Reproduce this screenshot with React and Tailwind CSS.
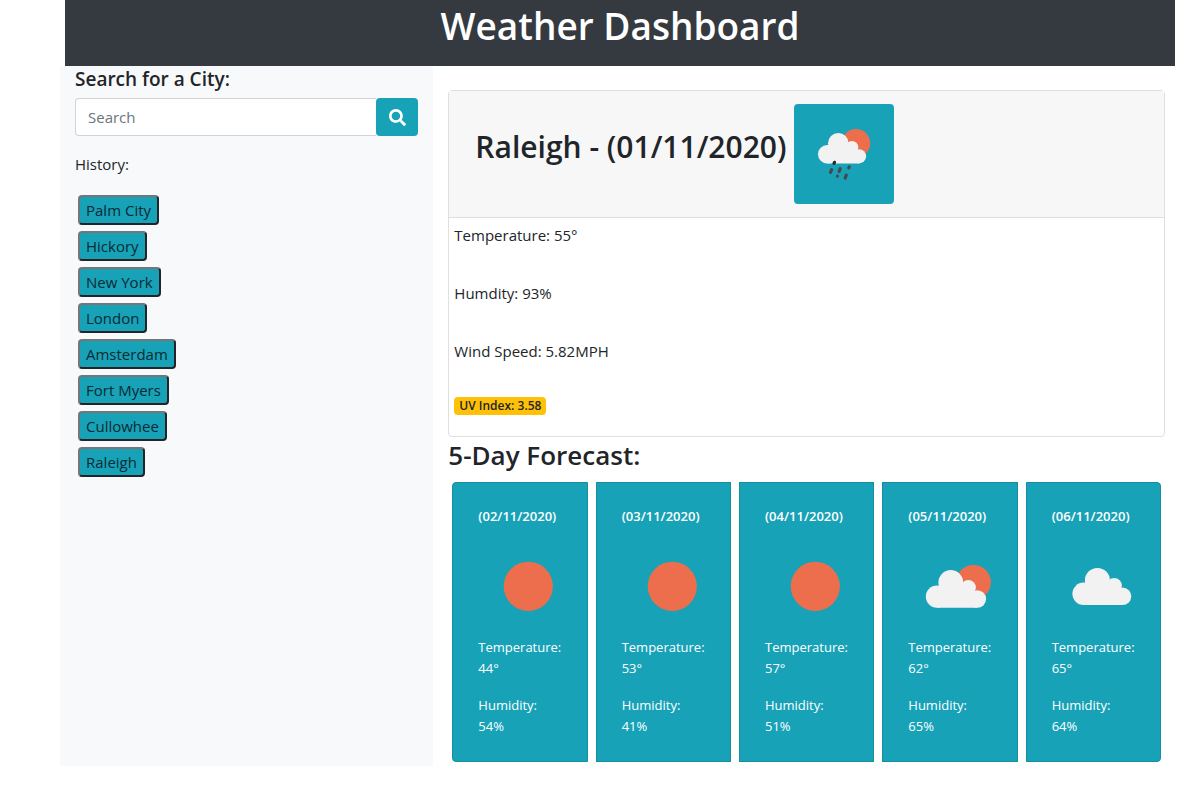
import React from "react";
import { FaSearch } from "react-icons/fa";

const history = [
  "Palm City",
  "Hickory",
  "New York",
  "London",
  "Amsterdam",
  "Fort Myers",
  "Cullowhee",
  "Raleigh",
];

const forecast = [
  { date: "02/11/2020", icon: "sun", temperature: 44, humidity: 54 },
  { date: "03/11/2020", icon: "sun", temperature: 53, humidity: 41 },
  { date: "04/11/2020", icon: "sun", temperature: 57, humidity: 51 },
  { date: "05/11/2020", icon: "partly", temperature: 62, humidity: 65 },
  { date: "06/11/2020", icon: "cloud", temperature: 65, humidity: 64 },
];

function SunIcon() {
  return <circle cx="50.3" cy="50.3" r="24.6" fill="#ec6e4c" />;
}

function PartlyIcon() {
  return (
    <>
      <circle cx="65.5" cy="46.3" r="17.4" fill="#ec6e4c" />
      <g fill="#f2f2f2">
        <circle cx="29" cy="60.6" r="11.2" />
        <circle cx="42.8" cy="46.4" r="12.4" />
        <circle cx="60.3" cy="51.6" r="7.6" />
        <circle cx="69.3" cy="63" r="8.8" />
        <path d="M29 50h12l19 1 9 8v12.8h-40z" />
      </g>
    </>
  );
}

function CloudIcon() {
  return (
    <g fill="#f2f2f2">
      <circle cx="31.6" cy="57.8" r="11.2" />
      <circle cx="45.4" cy="44.4" r="12.5" />
      <circle cx="62.2" cy="49.6" r="7.7" />
      <circle cx="70.6" cy="60.3" r="8.7" />
      <path d="M31.6 48h12l18 1 9 8v12h-39z" />
    </g>
  );
}

function RainIcon() {
  return (
    <>
      <circle cx="62" cy="39.3" r="14.2" fill="#ec6e4c" />
      <g fill="#f2f2f2">
        <circle cx="33.2" cy="50.2" r="9.2" />
        <circle cx="44.3" cy="39.3" r="10.3" />
        <circle cx="57.9" cy="43.4" r="6.4" />
        <circle cx="65" cy="52.3" r="7.1" />
        <path d="M33.2 41h10l15 1 7 8v9.4h-32z" />
      </g>
      <g stroke="#48484a" strokeWidth="3.2" strokeLinecap="round">
        <path d="M40.5 58.3l-.5 1.1" stroke="#26282a" />
        <path d="M37.7 65.6l-1.2 2.8" />
        <path d="M46.2 64.7l-1.1 2.7" />
        <path d="M55.2 63l-.4.9" />
        <path d="M43.5 72l-.2.4" strokeWidth="2.8" />
        <path d="M52.3 71.2l-1.1 2.8" />
      </g>
    </>
  );
}

const icons = { sun: SunIcon, partly: PartlyIcon, cloud: CloudIcon, rain: RainIcon };

function WeatherIcon({ name, className = "" }) {
  const Drawing = icons[name];
  return (
    <svg viewBox="0 0 100 100" className={`size-[100px] shrink-0 ${className}`} aria-hidden="true">
      <Drawing />
    </svg>
  );
}

function Sidebar() {
  return (
    <aside className="w-1/3 bg-[#f8f9fa] px-[15px] pb-6">
      <form onSubmit={(e) => e.preventDefault()}>
        <label htmlFor="city" className="block pt-px text-[19px] leading-6 font-semibold">
          Search for a City:
        </label>
        <div className="mt-[7px] flex h-[38px]">
          <input
            id="city"
            type="text"
            placeholder="Search"
            className="min-w-0 flex-1 rounded-l border border-r-0 border-[#ced4da] bg-white px-3 text-[15px] placeholder:text-[#6c757d] outline-none"
          />
          <button
            type="submit"
            aria-label="Search"
            className="flex w-[42px] items-center justify-center rounded bg-[#17a2b8] text-white"
          >
            <FaSearch size={17} />
          </button>
        </div>
      </form>
      <p className="mt-4 leading-6">History:</p>
      <ul className="mt-[19px] ml-[3px] flex flex-col items-start gap-[6px]">
        {history.map((city) => (
          <li key={city} className="flex">
            <button
              type="button"
              className="rounded border-2 border-t-[#767676] border-r-[#212529] border-b-[#212529] border-l-[#767676] bg-[#17a2b8] px-[6px] py-px leading-6 text-[#0b2a33]"
            >
              {city}
            </button>
          </li>
        ))}
      </ul>
    </aside>
  );
}

function CurrentWeather() {
  return (
    <section className="rounded border border-[#dfdfdf]">
      <header className="flex items-start gap-2 border-b border-[#dfdfdf] bg-[#f7f7f7] pt-[13px] pr-5 pb-[13px] pl-[26px]">
        <h2 className="pt-6 text-[30px] leading-[38px] font-semibold">Raleigh - (01/11/2020)</h2>
        <WeatherIcon name="rain" className="rounded bg-[#17a2b8]" />
      </header>
      <div className="flex flex-col items-start gap-[34px] px-[5px] pt-[5px] pb-[21px] leading-6">
        <p>Temperature: 55°</p>
        <p>Humdity: 93%</p>
        <p>Wind Speed: 5.82MPH</p>
        <span className="rounded bg-[#ffc107] px-[5px] text-[12px] leading-[18px] font-semibold">
          UV Index: 3.58
        </span>
      </div>
    </section>
  );
}

function ForecastCard({ date, icon, temperature, humidity }) {
  return (
    <li className="min-w-0 flex-1 border border-[#148ea1] bg-[#17a2b8] px-[25px] pt-[23px] pb-6 text-[13px] leading-[21px] text-white first:rounded-l last:rounded-r">
      <h3 className="font-semibold">({date})</h3>
      <WeatherIcon name={icon} className="mt-[9px] max-w-none" />
      <p className="pt-px">
        Temperature:
        <br />
        {temperature}°
      </p>
      <p className="mt-4">
        Humidity:
        <br />
        {humidity}%
      </p>
    </li>
  );
}

export default function App() {
  return (
    <div className="min-h-screen bg-white pr-[11px] pb-6 pl-[60px] font-['Open_Sans','Noto_Sans',sans-serif] text-[15px] text-[#212529]">
      <header className="mx-[5px] bg-[#343a40] pt-[2px] pb-4 text-center text-white">
        <h1 className="text-[37px] leading-[48px] font-semibold">Weather Dashboard</h1>
      </header>
      <div className="flex">
        <Sidebar />
        <main className="w-2/3 px-[15px] pt-6 pb-1">
          <CurrentWeather />
          <h2 className="mt-px text-[26px] leading-[34px] font-semibold">5-Day Forecast:</h2>
          <ul className="mx-1 mt-[10px] flex gap-2">
            {forecast.map((day) => (
              <ForecastCard key={day.date} {...day} />
            ))}
          </ul>
        </main>
      </div>
    </div>
  );
}
